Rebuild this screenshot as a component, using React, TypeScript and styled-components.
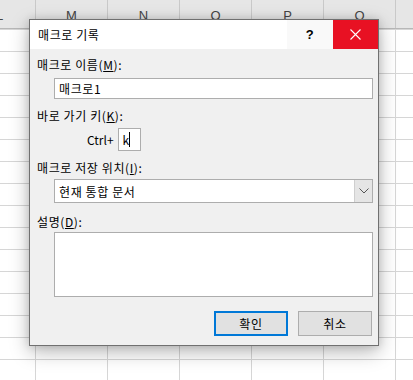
import { createGlobalStyle, styled } from "styled-components";

const Global = createGlobalStyle`
  html, body {
    margin: 0;
    padding: 0;
    background: #ffffff;
  }
  * { box-sizing: border-box; }
`;

const Page = styled.div`
  position: relative;
  width: 413px;
  height: 380px;
  overflow: hidden;
  background: #ffffff;
  font-family: "Noto Sans CJK KR", "Noto Sans", sans-serif;
  letter-spacing: 0.6px;
`;

const ColumnHeader = styled.div`
  display: flex;
  height: 29px;
  margin-left: -36px;
  background: #e6e6e6;
  border-bottom: 1px solid #b7b7b7;
`;

const ColumnCell = styled.div`
  flex: 0 0 72px;
  height: 100%;
  border-right: 1px solid #c9c9c9;
  display: flex;
  align-items: center;
  justify-content: center;
  padding-top: 2px;
  font-family: "Liberation Sans", Arial, sans-serif;
  font-size: 13px;
  letter-spacing: 0;
  color: #444444;
`;

const Cells = styled.div`
  height: 351px;
  background-image:
    linear-gradient(to bottom, #d6d6d6 1px, transparent 1px),
    linear-gradient(to right, #d6d6d6 1px, transparent 1px);
  background-size: 72px 22px, 72px 22px;
  background-position: 0 0, 35px 0;
`;

const Dialog = styled.div`
  position: absolute;
  left: 29px;
  top: 19px;
  width: 350px;
  height: 327px;
  border: 1px solid #707070;
  background: #f0f0f0;
  box-shadow: 0 6px 18px rgba(0, 0, 0, 0.28), 0 0 8px rgba(0, 0, 0, 0.12);
  display: flex;
  flex-direction: column;
`;

const TitleBar = styled.div`
  display: flex;
  align-items: stretch;
  height: 29px;
  background: #ffffff;
`;

const Title = styled.div`
  flex: 1;
  display: flex;
  align-items: center;
  padding-left: 8px;
  font-size: 12px;
  color: #000000;
`;

const TitleButton = styled.div<{ $close?: boolean }>`
  width: ${(p) => (p.$close ? "45px" : "46px")};
  display: flex;
  align-items: center;
  justify-content: center;
  background: ${(p) => (p.$close ? "#e81123" : "#f9f9f9")};
  color: ${(p) => (p.$close ? "#ffffff" : "#000000")};
  font-family: "Liberation Sans", Arial, sans-serif;
  font-size: 13px;
  font-weight: 700;
`;

const Body = styled.div`
  flex: 1;
  display: flex;
  flex-direction: column;
  padding: 8px 5px 8px 7px;
`;

const Label = styled.div<{ $gap?: number }>`
  margin-top: ${(p) => p.$gap ?? 0}px;
  height: 16px;
  line-height: 16px;
  font-size: 12px;
  color: #000000;
  white-space: nowrap;
`;

const Field = styled.div<{ $gap: number; $height: number }>`
  margin-top: ${(p) => p.$gap}px;
  margin-left: 17px;
  height: ${(p) => p.$height}px;
  background: #ffffff;
  border: 1px solid #adadad;
  display: flex;
  align-items: center;
  padding-left: 4px;
  font-size: 12px;
  color: #000000;
`;

const ShortcutRow = styled.div`
  margin-top: 4px;
  display: flex;
  align-items: center;
  gap: 4px;
  padding-left: 50px;
`;

const CtrlText = styled.span`
  font-size: 12px;
  letter-spacing: 0;
  color: #000000;
`;

const KeyBox = styled.div`
  width: 23px;
  height: 23px;
  background: #ffffff;
  border: 1px solid #adadad;
  display: flex;
  align-items: center;
  padding-left: 4px;
  font-size: 12px;
  letter-spacing: 0;
`;

const Caret = styled.span`
  display: inline-block;
  width: 1px;
  height: 15px;
  background: #000000;
`;

const SelectBox = styled(Field)`
  padding-right: 0;
  justify-content: space-between;
`;

const DropButton = styled.div`
  width: 18px;
  height: 100%;
  background: #e5e5e5;
  border-left: 1px solid #cfcfcf;
  display: flex;
  align-items: center;
  justify-content: center;
`;

const Buttons = styled.div`
  margin-top: 14px;
  display: flex;
  justify-content: flex-end;
  gap: 10px;
  padding-right: 1px;
`;

const Button = styled.div<{ $primary?: boolean }>`
  width: 74px;
  height: 25px;
  background: #e1e1e1;
  border: ${(p) => (p.$primary ? "2px solid #0078d7" : "1px solid #adadad")};
  display: flex;
  align-items: center;
  justify-content: center;
  font-size: 12px;
  color: #000000;
`;

const columns = ["L", "M", "N", "O", "P", "Q"];

export default function App() {
  return (
    <Page>
      <Global />
      <ColumnHeader>
        {columns.map((c) => (
          <ColumnCell key={c}>{c}</ColumnCell>
        ))}
      </ColumnHeader>
      <Cells />

      <Dialog>
        <TitleBar>
          <Title>매크로 기록</Title>
          <TitleButton>?</TitleButton>
          <TitleButton $close>
            <svg width="11" height="11" viewBox="0 0 11 11">
              <path d="M0.5 0.5 L10.5 10.5 M10.5 0.5 L0.5 10.5" stroke="#ffffff" strokeWidth="1.1" />
            </svg>
          </TitleButton>
        </TitleBar>
        <Body>
          <Label>
            매크로 이름(<u>M</u>):
          </Label>
          <Field $gap={5} $height={21}>
            매크로1
          </Field>

          <Label $gap={9}>
            바로 가기 키(<u>K</u>):
          </Label>
          <ShortcutRow>
            <CtrlText>Ctrl+</CtrlText>
            <KeyBox>
              k<Caret />
            </KeyBox>
          </ShortcutRow>

          <Label $gap={9}>
            매크로 저장 위치(<u>I</u>):
          </Label>
          <SelectBox $gap={3} $height={24}>
            <span>현재 통합 문서</span>
            <DropButton>
              <svg width="10" height="6" viewBox="0 0 10 6">
                <path d="M0.5 0.5 L5 5 L9.5 0.5" fill="none" stroke="#555555" strokeWidth="1" />
              </svg>
            </DropButton>
          </SelectBox>

          <Label $gap={11}>
            설명(<u>D</u>):
          </Label>
          <Field $gap={2} $height={65} />

          <Buttons>
            <Button $primary>확인</Button>
            <Button>취소</Button>
          </Buttons>
        </Body>
      </Dialog>
    </Page>
  );
}
